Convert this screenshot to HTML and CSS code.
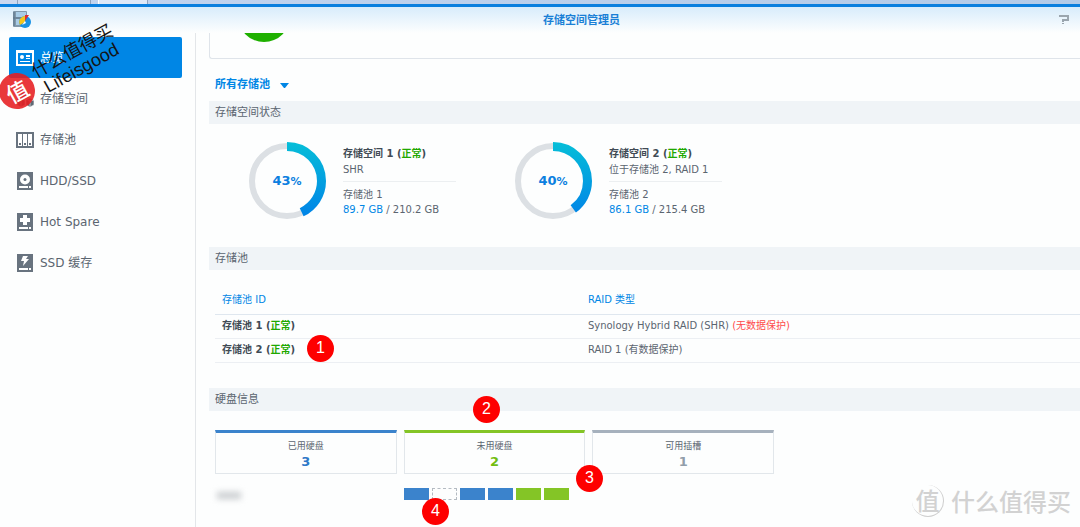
FILE: index.html
```html
<!DOCTYPE html>
<html lang="zh-CN">
<head>
<meta charset="utf-8">
<title>存储空间管理员</title>
<link rel="stylesheet" href="styles.css">
</head>
<body>
<div class="window">
  <div class="taskbar"><span class="task task-first"></span><span class="task task-wide"></span><span class="task task-active"></span></div>
  <header class="titlebar">
    <svg class="app-icon" width="20" height="18" viewBox="0 0 20 18" aria-hidden="true">
      <rect x="1" y="0" width="14" height="16" rx="1" fill="#8098ab"/>
      <path d="M4 1h10v5H4zM4 8h8v6H4z" fill="#a9cce6"/>
      <path d="M2 1v14M1 7h13" stroke="#5d7589" stroke-width="1"/>
      <circle cx="13" cy="11" r="6" fill="#1992e5"/>
      <path d="M13 11V5a6 6 0 0 0-5 9z" fill="#f5c61c"/>
      <path d="M13 10V4h4z" fill="#dc2b35"/>
      <path d="M10 14l3-4 1 2z" fill="#fff"/>
    </svg>
    <h1 class="title">存储空间管理员</h1>
    <button class="help" aria-label="帮助"><svg width="10" height="10" viewBox="0 0 10 10" aria-hidden="true"><path d="M0 1H9V5H4V7M4 8V9" fill="none" stroke="#9aa5ae" stroke-width="2"/></svg></button>
  </header>
  <div class="body">
    <nav class="sidebar">
      <a class="nav active" href="#"><svg width="18" height="18" viewBox="0 0 18 18" aria-hidden="true"><path d="M0 1h18v16H0z" fill="#fff"/><path d="M2 4h14v11H2z" fill="#0086e5"/><circle cx="6" cy="8" r="2" fill="#fff"/><path d="M10 6h4v2h-4zM10 9h4v1h-4zM4 12h10v1H4z" fill="#fff"/></svg><span>总览</span></a>
      <a class="nav" href="#"><svg width="18" height="18" viewBox="0 0 18 18" aria-hidden="true"><g stroke="#fff" stroke-width=".6"><path d="M5 1l4-1 4 2v6l-4 2-4-2zM1 8l4-1 4 2v6l-4 2-4-2zM10 9l4-1 4 2v5l-4 2-4-2z" fill="#606b76"/><path d="M5 1l4 2 4-1M9 3v6M1 8l4 2 4-1M5 10v6M10 9l4 2 4-1M14 11v5" fill="none"/></g></svg><span>存储空间</span></a>
      <a class="nav" href="#"><svg width="18" height="18" viewBox="0 0 18 18" aria-hidden="true"><path d="M0 1h18v16H0z" fill="#68737f"/><path d="M2 3h4v12H2zM7 3h4v12H7zM12 3h4v12h-4z" fill="#fff"/><path d="M3 12h2v2H3zM8 12h2v2H8zM13 12h2v2h-2z" fill="#68737f"/></svg><span>存储池</span></a>
      <a class="nav" href="#"><svg width="18" height="18" viewBox="0 0 18 18" aria-hidden="true"><path d="M1 0h16v18H1z" fill="#68737f"/><circle cx="9" cy="7.5" r="5" fill="#fff"/><circle cx="9" cy="7.5" r="1.5" fill="#68737f"/><path d="M3 14h9v2H3zM13 14h2v2h-2z" fill="#fff"/></svg><span>HDD/SSD</span></a>
      <a class="nav" href="#"><svg width="18" height="18" viewBox="0 0 18 18" aria-hidden="true"><path d="M1 0h16v18H1z" fill="#68737f"/><path d="M7 2h4v3h3v4h-3v3H7V9H4V5h3zM3 14h9v2H3zM13 14h2v2h-2z" fill="#fff"/></svg><span>Hot Spare</span></a>
      <a class="nav" href="#"><svg width="18" height="18" viewBox="0 0 18 18" aria-hidden="true"><path d="M1 0h16v18H1z" fill="#68737f"/><path d="M7 2h5l-2 3h3l-6 7 1-5H5zM3 14h9v2H3zM13 14h2v2h-2z" fill="#fff"/></svg><span>SSD 缓存</span></a>
    </nav>
    <main class="main">
      <div class="health"><div class="health-dot"></div></div>
      <button class="filter">所有存储池<svg width="9" height="5" viewBox="0 0 9 5" aria-hidden="true"><path d="M0 0h9L5 5H4z" fill="#0086e5"/></svg></button>

      <h2 class="bar">存储空间状态</h2>
      <div class="volumes">
        <section class="volume">
          <div class="ring">
            <svg width="78" height="78" viewBox="1 1 78 78" aria-hidden="true">
              <defs><linearGradient id="fill1" gradientUnits="userSpaceOnUse" x1="80" y1="0" x2="0" y2="0"><stop offset="0" stop-color="#06bfd8"/><stop offset="1" stop-color="#0080e8"/></linearGradient></defs>
              <circle cx="40" cy="40" r="35" fill="none" stroke="#dce0e4" stroke-width="6"/>
              <circle cx="40" cy="40" r="34.5" fill="none" stroke="url(#fill1)" stroke-width="9" pathLength="100" stroke-dasharray="43 57" transform="rotate(-90 40 40)"/>
            </svg>
            <div class="percent">43<small>%</small></div>
          </div>
          <div class="details">
            <p class="strong">存储空间 1 (<span class="ok">正常</span>)</p>
            <p class="sub">SHR</p>
            <p>存储池 1</p>
            <p><span class="used">89.7 GB</span> / 210.2 GB</p>
          </div>
        </section>
        <section class="volume">
          <div class="ring">
            <svg width="78" height="78" viewBox="1 1 78 78" aria-hidden="true">
              <circle cx="40" cy="40" r="35" fill="none" stroke="#dce0e4" stroke-width="6"/>
              <circle cx="40" cy="40" r="34.5" fill="none" stroke="url(#fill1)" stroke-width="9" pathLength="100" stroke-dasharray="40 60" transform="rotate(-90 40 40)"/>
            </svg>
            <div class="percent">40<small>%</small></div>
          </div>
          <div class="details">
            <p class="strong">存储空间 2 (<span class="ok">正常</span>)</p>
            <p class="sub">位于存储池 2, RAID 1</p>
            <p>存储池 2</p>
            <p><span class="used">86.1 GB</span> / 215.4 GB</p>
          </div>
        </section>
      </div>

      <h2 class="bar">存储池</h2>
      <table class="pools">
        <thead><tr><th>存储池 ID</th><th>RAID 类型</th></tr></thead>
        <tbody>
          <tr><td class="strong">存储池 1 (<span class="ok">正常</span>)</td><td>Synology Hybrid RAID (SHR) <span class="warn">(无数据保护)</span></td></tr>
          <tr><td class="strong">存储池 2 (<span class="ok">正常</span>)</td><td>RAID 1 (有数据保护)</td></tr>
        </tbody>
      </table>

      <h2 class="bar">硬盘信息</h2>
      <div class="disks">
        <div class="disk blue">已用硬盘<b>3</b></div>
        <div class="disk green">未用硬盘<b>2</b></div>
        <div class="disk gray">可用插槽<b>1</b></div>
        <div class="host"><span class="host-name"></span></div>
        <div class="slots"><i class="slot used-slot"></i><i class="slot empty-slot"></i><i class="slot used-slot"></i><i class="slot used-slot"></i><i class="slot free-slot"></i><i class="slot free-slot"></i></div>
      </div>
    </main>
  </div>
  <span class="mark mark-1">1</span>
  <span class="mark mark-2">2</span>
  <span class="mark mark-3">3</span>
  <span class="mark mark-4">4</span>
  <div class="seal">值</div>
  <div class="signature">什么值得买<br>Lifeisgood</div>
  <div class="watermark"><span class="watermark-seal">值</span>什么值得买</div>
</div>
</body>
</html>
```
FILE: styles.css
```css
* { box-sizing: border-box; }
body {
  margin: 0;
  overflow: hidden;
  background: #fdfefe;
  color: #5b6570;
  font: 10px/16px "DejaVu Sans", "Noto Sans CJK SC", sans-serif;
}
h1, h2, p { margin: 0; }
button { padding: 0; border: 0; background: none; font: inherit; cursor: pointer; }
.window { position: relative; min-height: 100vh; overflow: hidden; }

.taskbar {
  display: flex;
  height: 7px;
  background: linear-gradient(90deg, #c3d4ef, #b3cbe8);
  border-bottom: 3px solid #0a7fde;
}
.task { background: #cbd8f0; border-right: 1px solid #8fa3bd; }
.task-first { width: 18px; }
.task-wide { width: 73px; }
.task-active { width: 50px; margin-left: 7px; background: #dfe9f8; border-left: 1px solid #fff; }

.titlebar {
  display: flex;
  align-items: center;
  height: 26px;
  padding: 0 11px 0 12px;
  background: linear-gradient(#d8ecfb, #fdfefe);
}
.title {
  flex: 1;
  padding: 2px 0 0 72px;
  color: #1a7fd6;
  font-size: 11px;
  line-height: 16px;
  font-weight: 700;
  text-align: center;
}
.help { height: 10px; line-height: 0; }

.body { display: flex; }
.sidebar {
  flex: none;
  width: 196px;
  min-height: calc(100vh - 33px);
  padding: 4px 13px 0 9px;
  border-right: 1px solid #e3e6e9;
}
.nav {
  display: flex;
  align-items: center;
  gap: 6px;
  height: 41px;
  padding-left: 7px;
  border-radius: 2px;
  color: #5b6570;
  font-size: 12px;
  text-decoration: none;
}
.nav.active { background: #0086e5; color: #fff; }

.main { flex: 1; min-width: 0; padding-left: 13px; }
.health {
  height: 26px;
  padding-left: 28px;
  overflow: hidden;
  border: solid #dfe4ea;
  border-width: 0 0 1px 1px;
  border-bottom-left-radius: 3px;
}
.health-dot { width: 52px; height: 52px; margin-top: -43px; border-radius: 50%; background: #1fb000; }
.filter {
  display: flex;
  align-items: center;
  gap: 10px;
  margin: 18px 0 8px 6px;
  color: #0086e5;
  font-size: 11px;
  line-height: 16px;
  font-weight: 700;
}
.bar {
  height: 23px;
  padding-left: 6px;
  background: #f0f4f7;
  color: #5b6570;
  font-size: 11px;
  line-height: 23px;
  font-weight: 400;
}
.strong { color: #414b55; font-weight: 700; }
.ok { color: #1fa800; }
.used { color: #0086e5; }
.warn { color: #ff4b4b; }

.volumes { display: flex; gap: 38px; padding: 18px 0 27px 39px; }
.volume { display: flex; gap: 17px; width: 228px; }
.ring { position: relative; flex: none; width: 78px; height: 78px; }
.percent {
  position: absolute;
  inset: 0;
  color: #0c80e0;
  font-size: 13px;
  line-height: 78px;
  font-weight: 700;
  text-align: center;
}
.percent small { font-size: 11px; }
.details { flex: none; width: 113px; padding-top: 4px; line-height: 15px; white-space: nowrap; }
.details .sub { margin: 1px 0 5px; padding-bottom: 4px; border-bottom: 1px solid #eceff1; }

.pools { width: calc(100% - 6px); margin: 16px 0 25px 6px; border-collapse: collapse; table-layout: fixed; }
.pools th, .pools td { padding: 0 7px; text-align: left; border-bottom: 1px solid #eceff3; height: 24px; }
.pools th { height: 28px; color: #0086e5; font-weight: 400; border-bottom-color: #dfe7ef; }
.pools th:first-child { width: 42.3%; }

.disks {
  display: grid;
  grid-template-columns: repeat(3, 1fr);
  gap: 14px 7px;
  max-width: 565px;
  padding: 19px 0 0 6px;
}
.disk {
  height: 44px;
  padding-top: 6px;
  border: 1px solid #e2e7eb;
  border-top: 3px solid;
  font-size: 9px;
  line-height: 15px;
  text-align: center;
}
.disk b { display: block; font-size: 13px; line-height: 16px; }
.blue { border-top-color: #3b83cc; }
.blue b { color: #2f79c8; }
.green { border-top-color: #84c526; }
.green b { color: #72bd12; }
.gray { border-top-color: #a6b1bd; }
.gray b { color: #929eaa; }
.host { padding: 4px 2px; }
.host-name { display: block; width: 24px; height: 7px; background: #c9cccf; filter: blur(3px); }
.slots { display: flex; gap: 3px; }
.slot { width: 25px; height: 12px; }
.used-slot { background: #3b83cc; }
.free-slot { background: #84c526; }
.empty-slot { border: 1px dashed #b4bbc2; }

.mark {
  position: absolute;
  width: 27px;
  height: 27px;
  border-radius: 50%;
  background: #fe0000;
  color: #fff;
  font: 16px/26px "Liberation Sans", sans-serif;
  text-align: center;
}
.mark-1 { left: 307px; top: 335px; }
.mark-2 { left: 473px; top: 396px; }
.mark-3 { left: 576px; top: 465px; }
.mark-4 { left: 422px; top: 498px; }

.seal {
  position: absolute;
  left: -1px;
  top: 73px;
  width: 36px;
  height: 36px;
  border-radius: 50%;
  background: rgba(230, 28, 32, .88);
  color: #fff;
  font: 500 22px/35px "Noto Sans CJK SC", sans-serif;
  text-align: center;
  transform: rotate(-29deg);
}
.signature {
  position: absolute;
  left: 27px;
  top: 41px;
  width: 100px;
  color: #141414;
  font: 18px/19px "Liberation Sans", "Noto Sans CJK SC", sans-serif;
  text-align: center;
  transform: rotate(-29deg);
}
.watermark {
  position: absolute;
  right: 9px;
  bottom: 10px;
  display: flex;
  align-items: center;
  gap: 7px;
  color: #d2d2d2;
  font: 500 24px/32px "Noto Sans CJK SC", sans-serif;
}
.watermark-seal {
  width: 32px;
  height: 32px;
  border-right: 1px solid #cfcfcf;
  border-bottom: 1px solid #cfcfcf;
  border-radius: 50%;
  line-height: 30px;
  text-align: center;
}
```
